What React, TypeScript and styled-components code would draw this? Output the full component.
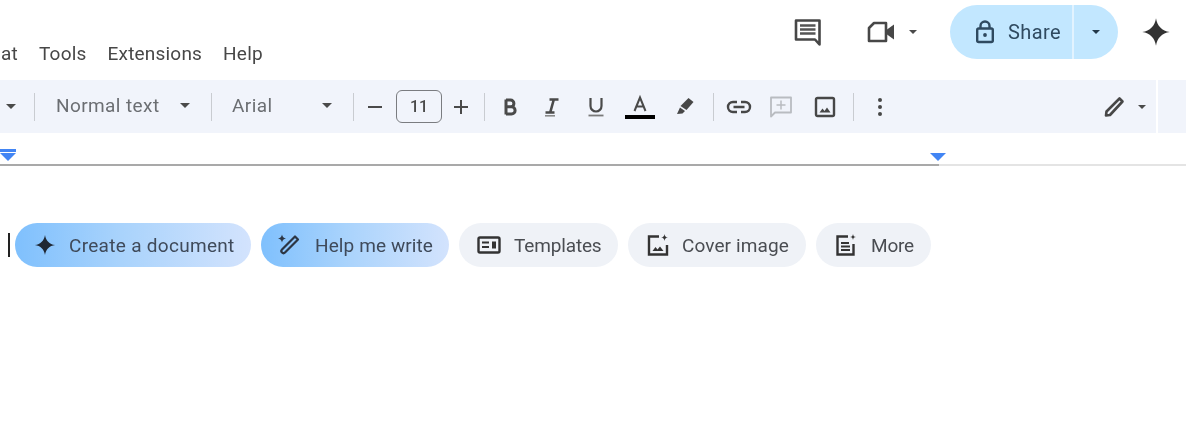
import React from 'react';
import styled, { createGlobalStyle } from 'styled-components';

const GlobalStyle = createGlobalStyle`
  html, body {
    margin: 0;
    padding: 0;
    background: #fff;
  }
  body {
    font-family: 'Roboto', 'Liberation Sans', sans-serif;
  }
`;

const Page = styled.div`
  width: 1186px;
  height: 437px;
  overflow: hidden;
  background: #fff;
  filter: blur(0.5px);
`;

const Header = styled.header`
  height: 80px;
  display: flex;
  justify-content: space-between;
`;

const Menu = styled.nav`
  display: flex;
  align-items: flex-end;
  gap: 21px;
  margin-left: -44px;
  padding-bottom: 15px;
  font-size: 19px;
  letter-spacing: 0.2px;
  line-height: 22px;
  color: #474747;
`;

const Actions = styled.div`
  display: flex;
  align-items: flex-start;
  padding: 5px 15px 0 0;
`;

const IconSlot = styled.div<{ $w: number; $ml?: number }>`
  width: ${(p) => p.$w}px;
  height: 54px;
  margin-left: ${(p) => p.$ml ?? 0}px;
  display: flex;
  align-items: center;
  justify-content: center;
  flex-shrink: 0;
`;

const Caret = styled.span<{ $size?: number; $color?: string }>`
  display: block;
  width: 0;
  height: 0;
  border-left: ${(p) => p.$size ?? 5}px solid transparent;
  border-right: ${(p) => p.$size ?? 5}px solid transparent;
  border-top: ${(p) => p.$size ?? 5}px solid ${(p) => p.$color ?? '#4a4a4a'};
`;

const ShareButton = styled.div`
  width: 168px;
  height: 54px;
  margin-left: 23px;
  display: flex;
  border-radius: 27px;
  overflow: hidden;
  background: #c2e7ff;
  color: #2f4a60;
`;

const ShareMain = styled.div`
  width: 124px;
  padding-left: 25px;
  box-sizing: border-box;
  display: flex;
  align-items: center;
  gap: 13px;
  font-size: 20px;
  letter-spacing: 0.4px;
  border-right: 2px solid #e2f3ff;
`;

const ShareCaret = styled.div`
  flex: 1;
  display: flex;
  align-items: center;
  justify-content: center;
`;

const ToolbarRow = styled.div`
  display: flex;
  gap: 2px;
  height: 53px;
`;

const Toolbar = styled.div`
  width: 1156px;
  flex-shrink: 0;
  display: flex;
  align-items: center;
  background: #f1f4fb;
`;

const ToolbarTail = styled.div`
  flex: 1;
  background: #f1f4fb;
`;

const ToolSlot = styled.div<{ $w: number }>`
  width: ${(p) => p.$w}px;
  height: 36px;
  flex-shrink: 0;
  display: flex;
  align-items: center;
  justify-content: center;
  color: #474747;
`;

const Divider = styled.span`
  display: block;
  width: 1px;
  height: 28px;
  background: #c9ccd1;
`;

const Select = styled.div<{ $w: number }>`
  width: ${(p) => p.$w}px;
  flex-shrink: 0;
  box-sizing: border-box;
  padding: 0 10px 2px;
  display: flex;
  align-items: center;
  justify-content: space-between;
  font-size: 19px;
  letter-spacing: 0.4px;
  color: #6b6e72;
`;

const SizeBox = styled.div`
  width: 46px;
  height: 33px;
  margin: 0 8px 0 10px;
  flex-shrink: 0;
  box-sizing: border-box;
  display: flex;
  align-items: center;
  justify-content: center;
  border: 1px solid #7a7c80;
  border-radius: 6px;
  font-size: 16px;
  font-weight: 500;
  color: #4a4a4a;
`;

const PushRight = styled.div`
  margin-left: auto;
  display: flex;
  align-items: center;
`;

const Ruler = styled.div`
  height: 33px;
  display: flex;
  flex-direction: column;
`;

const MarkerRow = styled.div`
  flex: 1;
  display: flex;
  justify-content: space-between;
  align-items: flex-end;
  padding: 0 240px 1px 0;
`;

const IndentMarker = styled.div`
  display: flex;
  flex-direction: column;
  align-items: center;
  gap: 1px;
  margin-bottom: 2px;
`;

const IndentBar = styled.span`
  display: block;
  width: 16px;
  height: 3px;
  background: #4285f4;
`;

const RulerLine = styled.div`
  height: 2px;
  display: flex;
`;

const RulerFilled = styled.div`
  width: 939px;
  background: #a9a9a9;
`;

const RulerEmpty = styled.div`
  flex: 1;
  background: #e4e4e4;
`;

const ChipRow = styled.div`
  margin-top: 57px;
  padding-left: 8px;
  display: flex;
  align-items: center;
  gap: 10px;
`;

const TextCursor = styled.span`
  display: block;
  width: 2px;
  height: 24px;
  margin-right: -5px;
  background: #222;
`;

const Chip = styled.div<{ $w: number; $accent?: boolean; $pad: number; $gap: number; $ls: number }>`
  width: ${(p) => p.$w}px;
  height: 44px;
  flex-shrink: 0;
  box-sizing: border-box;
  padding-left: ${(p) => p.$pad}px;
  display: flex;
  align-items: center;
  gap: ${(p) => p.$gap}px;
  border-radius: 22px;
  font-size: 19px;
  letter-spacing: ${(p) => p.$ls}px;
  white-space: nowrap;
  color: ${(p) => (p.$accent ? '#3f4a5a' : '#4a4d52')};
  background: ${(p) =>
    p.$accent ? 'linear-gradient(90deg, #7fc0fd 0%, #a9d3fc 45%, #d3e3fd 100%)' : '#eff2f7'};
`;

const Spark = ({ size, color = '#2c2c2c' }: { size: number; color?: string }) => (
  <svg width={size} height={size} viewBox="0 0 24 24" fill={color}>
    <path d="M12 1c.9 6.2 4.8 10.100 11 11-6.200.9-10.100 4.800-11 11-.9-6.200-4.800-10.100-11-11 6.200-.9 10.100-4.800 11-11z" />
  </svg>
);

const CommentIcon = () => (
  <svg width="30" height="30" viewBox="0 0 30 30" fill="none">
    <path d="M3 3.500h23.500v24L22 22.500H3z" stroke="#474747" strokeWidth="2.600" strokeLinejoin="round" />
    <path d="M7 8.500h15.500M7 12.500h15.500M7 16.500h15.500" stroke="#555" strokeWidth="2.400" />
  </svg>
);

const VideoIcon = () => (
  <svg width="30" height="26" viewBox="0 0 30 26" fill="none">
    <path d="M8 4h12v18H3V9z" stroke="#474747" strokeWidth="2.600" strokeLinejoin="round" />
    <path d="M21 10.500 28 5.500v15l-7-5z" fill="#474747" />
  </svg>
);

const LockIcon = () => (
  <svg width="20" height="24" viewBox="0 0 20 24" fill="none">
    <rect x="2.200" y="8.500" width="15.600" height="13.500" rx="1.500" stroke="#2f4a60" strokeWidth="2.400" />
    <path d="M5.500 8.500V6a4.500 4.500 0 0 1 9 0v2.500" stroke="#2f4a60" strokeWidth="2.400" />
    <circle cx="10" cy="15" r="1.900" fill="#2f4a60" />
  </svg>
);

const BoldIcon = () => (
  <svg width="18" height="20" viewBox="0 0 18 20" fill="none" stroke="#4a4a4a" strokeWidth="3">
    <path d="M5 2.500v15M5 3h4.500a3.400 3.400 0 0 1 0 6.800H5M5 9.800h5.500a3.600 3.600 0 0 1 0 7.200H5" />
  </svg>
);

const ItalicIcon = () => (
  <svg width="18" height="20" viewBox="0 0 18 20" fill="none" stroke="#4a4a4a" strokeWidth="2.600">
    <path d="M6.500 2.500h9M10.800 2.500 7.200 15.500M2.500 15.500h9" />
    <path d="M2 18.800h10" strokeWidth="1.600" stroke="#8a8a8a" />
  </svg>
);

const UnderlineIcon = () => (
  <svg width="18" height="22" viewBox="0 0 18 22" fill="none" stroke="#4a4a4a" strokeWidth="2.200">
    <path d="M3.500 2v8a5.500 5.500 0 0 0 11 0V2" />
    <path d="M1.500 19.500h15" stroke="#7a7a7a" strokeWidth="1.800" />
  </svg>
);

const TextColorIcon = () => (
  <svg width="30" height="26" viewBox="0 0 30 26" fill="none">
    <path d="M9.500 17 15 3.500 20.500 17M11.300 12.500h7.400" stroke="#4a4a4a" strokeWidth="2" />
    <rect y="21" width="30" height="4" fill="#000" />
  </svg>
);

const HighlightIcon = () => (
  <svg width="20" height="18" viewBox="0 0 20 18" fill="#474747">
    <path d="M13.500 0 18.500 4 11.500 12 5.500 8z" />
    <path d="M5 9.500 10 13l-2.500 2.500-5.500.5z" />
  </svg>
);

const LinkIcon = () => (
  <svg width="26" height="16" viewBox="0 0 26 16" fill="none" stroke="#474747" strokeWidth="2.400">
    <path d="M11 3H7a5 5 0 0 0 0 10h4M15 3h4a5 5 0 0 1 0 10h-4M7.500 8h11" />
  </svg>
);

const AddCommentIcon = () => (
  <svg width="24" height="24" viewBox="0 0 24 24" fill="none" stroke="#b9bcc1" strokeWidth="1.800">
    <path d="M2 2.500h20v15H6l-4 4z" strokeLinejoin="round" />
    <path d="M12 5.500v9M7.500 10h9" strokeWidth="1.500" />
  </svg>
);

const ImageIcon = ({ color = '#474747' }: { color?: string }) => (
  <svg width="22" height="22" viewBox="0 0 22 22" fill="none">
    <rect x="2" y="2" width="18" height="18" rx="1.500" stroke={color} strokeWidth="2.400" />
    <path d="M5.500 16.500 8.500 12.500l2 2.500 2.500-3.500 3.500 5z" fill={color} />
  </svg>
);

const DotsIcon = () => (
  <svg width="6" height="20" viewBox="0 0 6 20" fill="#474747">
    <circle cx="3" cy="3" r="2" />
    <circle cx="3" cy="10" r="2" />
    <circle cx="3" cy="17" r="2" />
  </svg>
);

const PencilIcon = () => (
  <svg width="22" height="22" viewBox="0 0 22 22" fill="none" stroke="#474747" strokeWidth="2.600">
    <path d="M16.500 2.500 19.500 5.500 7 19l-4 .5.500-4z" strokeLinejoin="round" />
  </svg>
);

const WandIcon = () => (
  <svg width="24" height="24" viewBox="0 0 24 24" fill="none">
    <path d="M18 3.500 21 6.500 8 19.500a2.100 2.100 0 0 1-3-3z" stroke="#2c3644" strokeWidth="2.200" strokeLinejoin="round" />
    <path d="M5 1.500c.4 2.400 1.600 3.600 4 4-2.400.4-3.600 1.600-4 4-.4-2.400-1.600-3.600-4-4 2.400-.4 3.600-1.600 4-4z" fill="#2c3644" />
  </svg>
);

const TemplatesIcon = () => (
  <svg width="24" height="20" viewBox="0 0 24 20" fill="none">
    <rect x="1.500" y="2.500" width="21" height="15" rx="1.500" stroke="#333" strokeWidth="2.400" />
    <rect x="5" y="6.500" width="7" height="2" fill="#333" />
    <rect x="5" y="11" width="7" height="2" fill="#333" />
    <rect x="15" y="6.500" width="4" height="7" fill="#333" />
  </svg>
);

const CoverIcon = () => (
  <svg width="24" height="24" viewBox="0 0 24 24" fill="none">
    <path d="M13 3.500H3v18h18V12" stroke="#333" strokeWidth="2.400" />
    <path d="M6.500 18 9.500 14l2 2.500 2.500-3 3.500 4.500z" fill="#333" />
    <path d="M18.500 1c.3 2.300 1.200 3.200 3.500 3.500-2.300.3-3.200 1.200-3.500 3.500-.3-2.300-1.200-3.200-3.500-3.500 2.300-.3 3.200-1.200 3.500-3.500z" fill="#333" />
  </svg>
);

const MoreIcon = () => (
  <svg width="24" height="24" viewBox="0 0 24 24" fill="none">
    <path d="M14 3.500H3.500v18h16V11" stroke="#333" strokeWidth="2.400" />
    <path d="M7 10h8M7 13.500h9M7 17h9" stroke="#333" strokeWidth="1.800" />
    <path d="M19 1c.3 2 1 2.700 3 3-2 .3-2.700 1-3 3-.3-2-1-2.700-3-3 2-.3 2.700-1 3-3z" fill="#333" />
  </svg>
);

const App: React.FC = () => {
  return (
    <Page>
      <GlobalStyle />
      <Header>
        <Menu>
          <span>Format</span>
          <span>Tools</span>
          <span>Extensions</span>
          <span>Help</span>
        </Menu>
        <Actions>
          <IconSlot $w={44}>
            <CommentIcon />
          </IconSlot>
          <IconSlot $w={36} $ml={33}>
            <VideoIcon />
          </IconSlot>
          <IconSlot $w={28}>
            <Caret $size={4} />
          </IconSlot>
          <ShareButton>
            <ShareMain>
              <LockIcon />
              <span>Share</span>
            </ShareMain>
            <ShareCaret>
              <Caret $size={4} $color="#22384a" />
            </ShareCaret>
          </ShareButton>
          <IconSlot $w={30} $ml={23}>
            <Spark size={30} color="#333" />
          </IconSlot>
        </Actions>
      </Header>

      <ToolbarRow>
        <Toolbar>
          <ToolSlot $w={22}>
            <Caret />
          </ToolSlot>
          <ToolSlot $w={24}>
            <Divider />
          </ToolSlot>
          <Select $w={154}>
            <span>Normal text</span>
            <Caret />
          </Select>
          <ToolSlot $w={22}>
            <Divider />
          </ToolSlot>
          <Select $w={120}>
            <span>Arial</span>
            <Caret />
          </Select>
          <ToolSlot $w={22}>
            <Divider />
          </ToolSlot>
          <ToolSlot $w={22}>
            <svg width="16" height="16" viewBox="0 0 16 16" stroke="#4a4a4a" strokeWidth="2">
              <path d="M1 8h14" />
            </svg>
          </ToolSlot>
          <SizeBox>11</SizeBox>
          <ToolSlot $w={22}>
            <svg width="16" height="16" viewBox="0 0 16 16" stroke="#4a4a4a" strokeWidth="2">
              <path d="M1 8h14M8 1v14" />
            </svg>
          </ToolSlot>
          <ToolSlot $w={24}>
            <Divider />
          </ToolSlot>
          <ToolSlot $w={28}>
            <BoldIcon />
          </ToolSlot>
          <ToolSlot $w={56}>
            <ItalicIcon />
          </ToolSlot>
          <ToolSlot $w={32}>
            <UnderlineIcon />
          </ToolSlot>
          <ToolSlot $w={56}>
            <TextColorIcon />
          </ToolSlot>
          <ToolSlot $w={34}>
            <HighlightIcon />
          </ToolSlot>
          <ToolSlot $w={22}>
            <Divider />
          </ToolSlot>
          <ToolSlot $w={30}>
            <LinkIcon />
          </ToolSlot>
          <ToolSlot $w={54}>
            <AddCommentIcon />
          </ToolSlot>
          <ToolSlot $w={34}>
            <ImageIcon />
          </ToolSlot>
          <ToolSlot $w={22}>
            <Divider />
          </ToolSlot>
          <ToolSlot $w={32}>
            <DotsIcon />
          </ToolSlot>
          <PushRight>
            <ToolSlot $w={28}>
              <PencilIcon />
            </ToolSlot>
            <ToolSlot $w={28}>
              <Caret $size={4} />
            </ToolSlot>
          </PushRight>
        </Toolbar>
        <ToolbarTail />
      </ToolbarRow>

      <Ruler>
        <MarkerRow>
          <IndentMarker>
            <IndentBar />
            <Caret $size={8} $color="#4285f4" />
          </IndentMarker>
          <IndentMarker>
            <Caret $size={8} $color="#4285f4" />
          </IndentMarker>
        </MarkerRow>
        <RulerLine>
          <RulerFilled />
          <RulerEmpty />
        </RulerLine>
      </Ruler>

      <ChipRow>
        <TextCursor />
        <Chip $w={236} $accent $pad={19} $gap={13} $ls={0.3}>
          <Spark size={22} color="#1f2733" />
          <span>Create a document</span>
        </Chip>
        <Chip $w={188} $accent $pad={16} $gap={14} $ls={0.1}>
          <WandIcon />
          <span>Help me write</span>
        </Chip>
        <Chip $w={159} $pad={18} $gap={13} $ls={-0.15}>
          <TemplatesIcon />
          <span>Templates</span>
        </Chip>
        <Chip $w={178} $pad={18} $gap={12} $ls={0.1}>
          <CoverIcon />
          <span>Cover image</span>
        </Chip>
        <Chip $w={115} $pad={18} $gap={13} $ls={-0.2}>
          <MoreIcon />
          <span>More</span>
        </Chip>
      </ChipRow>
    </Page>
  );
};

export default App;
